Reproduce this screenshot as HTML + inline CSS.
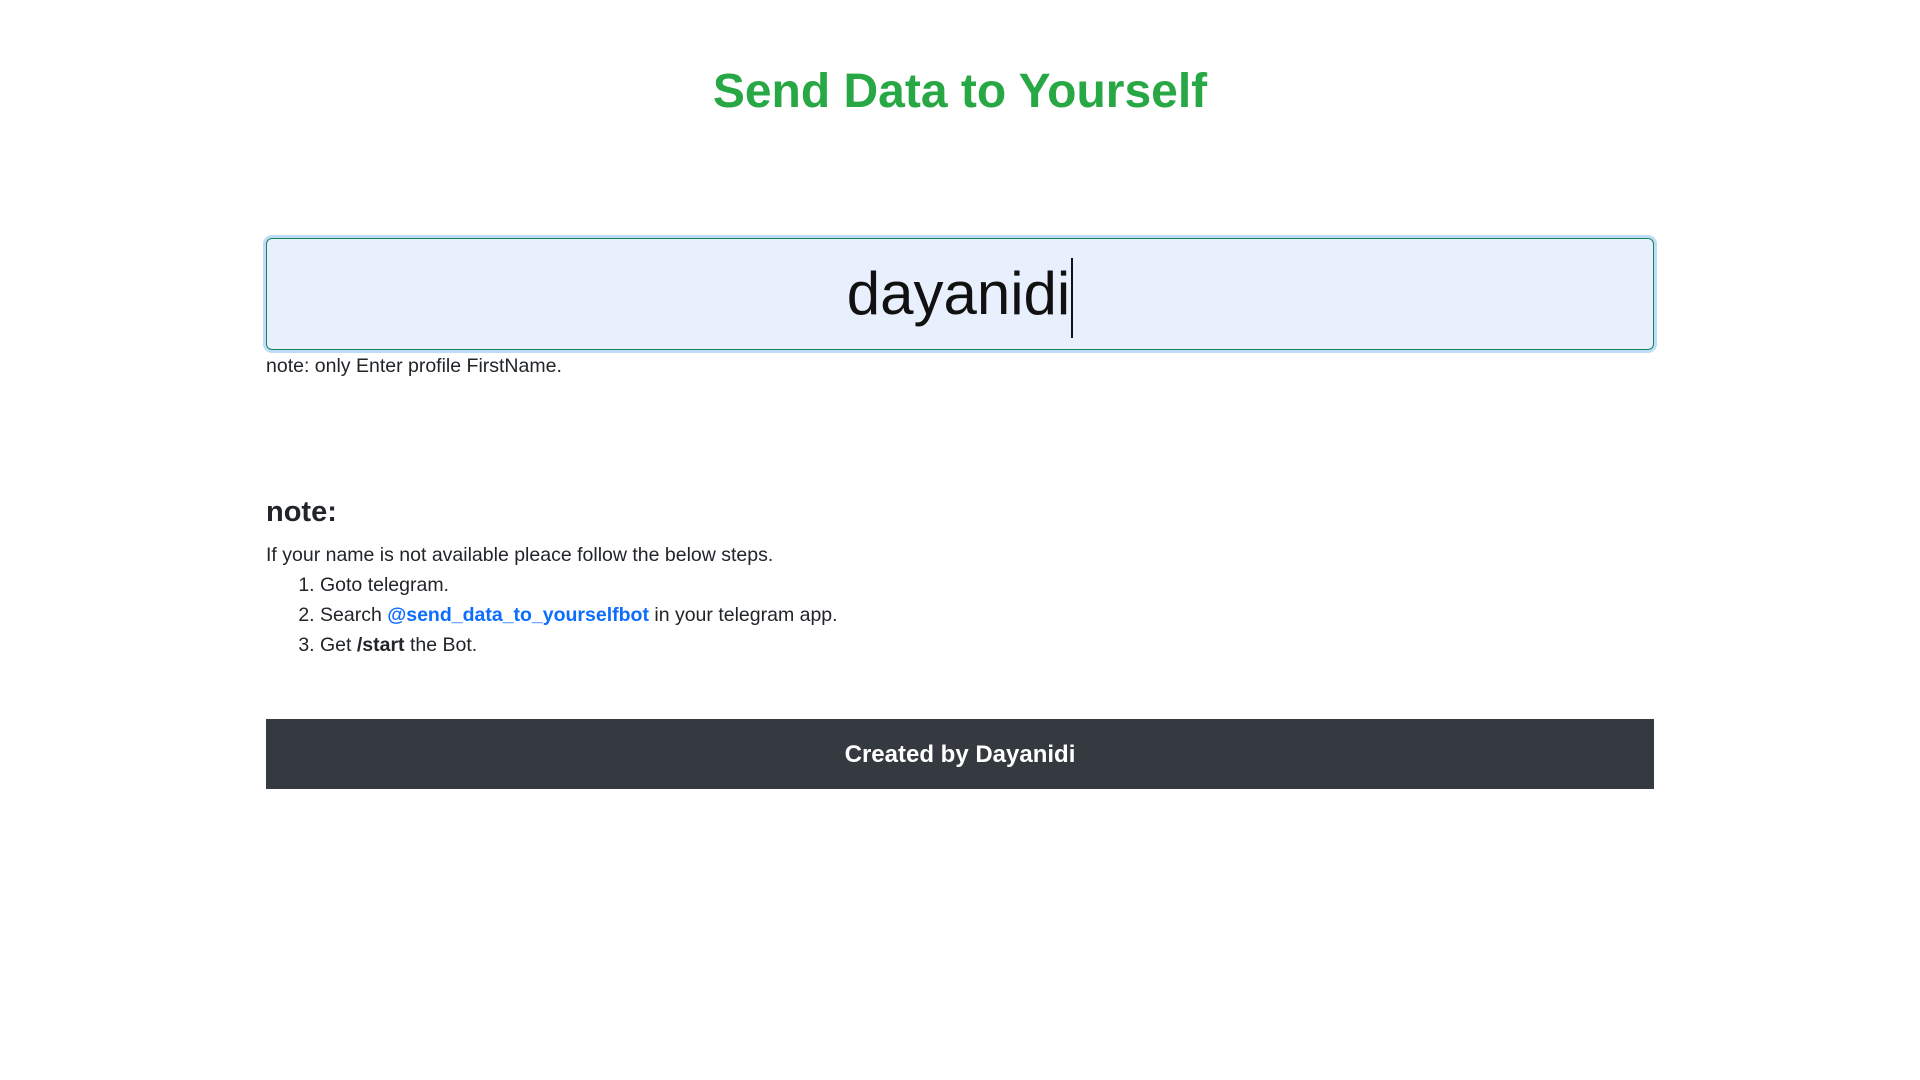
<!DOCTYPE html>
<html><head><meta charset="utf-8"><style>
body{margin:0;background:#fff;font-family:"Liberation Sans",sans-serif;color:#212529;font-size:19.5px;line-height:30px}
.c{position:absolute;left:266px;width:1388px}
h1{position:absolute;left:0;width:1920px;top:62px;margin:0;text-align:center;color:#28a745;font-size:48px;line-height:60px;font-weight:bold}
.inp{position:absolute;left:266px;top:238px;width:1386px;height:110px;border:1px solid #198754;border-radius:6px;background:#e8f0fe;box-shadow:0 0 0 3px #bfdcfb;text-align:center;font-size:60px;line-height:110px;color:#111}
.cur{display:inline-block;width:2px;height:80px;background:#111;vertical-align:middle;margin-left:1px}
.n1{top:351px}
.h4{top:494px;font-size:29px;line-height:36px;font-weight:600}
.p{top:540px}
ol{margin:0;padding-left:54px}
a{color:#0d6efd;font-weight:bold;text-decoration:none}
.f{position:absolute;left:266px;top:719px;width:1388px;height:70px;background:#343a40;color:#fff;text-align:center;font-weight:bold;font-size:24px;line-height:72px}
</style></head><body>
<h1>Send Data to Yourself</h1>
<div class="inp">dayanidi<span class="cur"></span></div>
<div class="c n1">note: only Enter profile FirstName.</div>
<div class="c h4">note:</div>
<div class="c p">If your name is not available pleace follow the below steps.
<ol><li>Goto telegram.</li><li>Search <a>@send_data_to_yourselfbot</a> in your telegram app.</li><li>Get <b>/start</b> the Bot.</li></ol></div>
<div class="f">Created by Dayanidi</div>
</body></html>
